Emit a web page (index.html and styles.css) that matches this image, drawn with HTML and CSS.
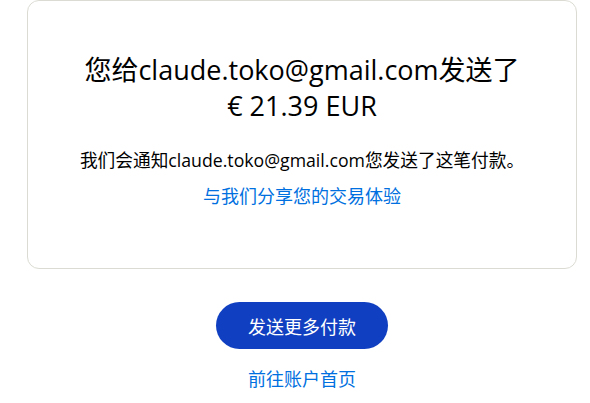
FILE: index.html
```html
<!DOCTYPE html>
<html lang="zh-CN">
<head>
    <meta charset="UTF-8">
    <meta name="viewport" content="width=device-width, initial-scale=1.0">
    <title>付款已发送</title>
    <link rel="stylesheet" href="styles.css">
</head>
<body>
    <div class="page">
        <div class="card">
            <h1>您给claude.toko@gmail.com发送了<br>€ 21.39 EUR</h1>
            <p class="notice">我们会通知claude.toko@gmail.com您发送了这笔付款。</p>
            <a href="#" class="share-link">与我们分享您的交易体验</a>
        </div>

        <div class="actions">
            <button class="send-more">发送更多付款</button>
            <a href="#" class="home-link">前往账户首页</a>
        </div>
    </div>
</body>
</html>
```

FILE: styles.css
```css
body {
    font-family: 'Open Sans', 'Noto Sans CJK SC', sans-serif;
    background: #fff;
    color: #000;
    margin: 0;
}
.page {
    width: 550px;
    margin-left: 27px;
    display: flex;
    flex-direction: column;
    align-items: center;
}
.card {
    width: 100%;
    box-sizing: border-box;
    border: 1px solid #dcdbd3;
    border-radius: 12px;
    padding: 51px 20px 58px;
    display: flex;
    flex-direction: column;
    align-items: center;
    text-align: center;
}
h1 {
    font-size: 27px;
    font-weight: normal;
    line-height: 36px;
    margin: 0 0 22px;
}
.notice {
    font-size: 17.7px;
    line-height: 28px;
    margin: 0 0 8px;
}
.share-link, .home-link {
    color: #0070e0;
    font-size: 18px;
    line-height: 28px;
    text-decoration: none;
}
.actions {
    display: flex;
    flex-direction: column;
    align-items: center;
    margin-top: 33px;
}
.send-more {
    background: #1040c1;
    color: white;
    border: none;
    width: 172px;
    height: 47px;
    border-radius: 24px;
    font-family: inherit;
    font-size: 18px;
    cursor: pointer;
    margin-bottom: 16px;
}
```
